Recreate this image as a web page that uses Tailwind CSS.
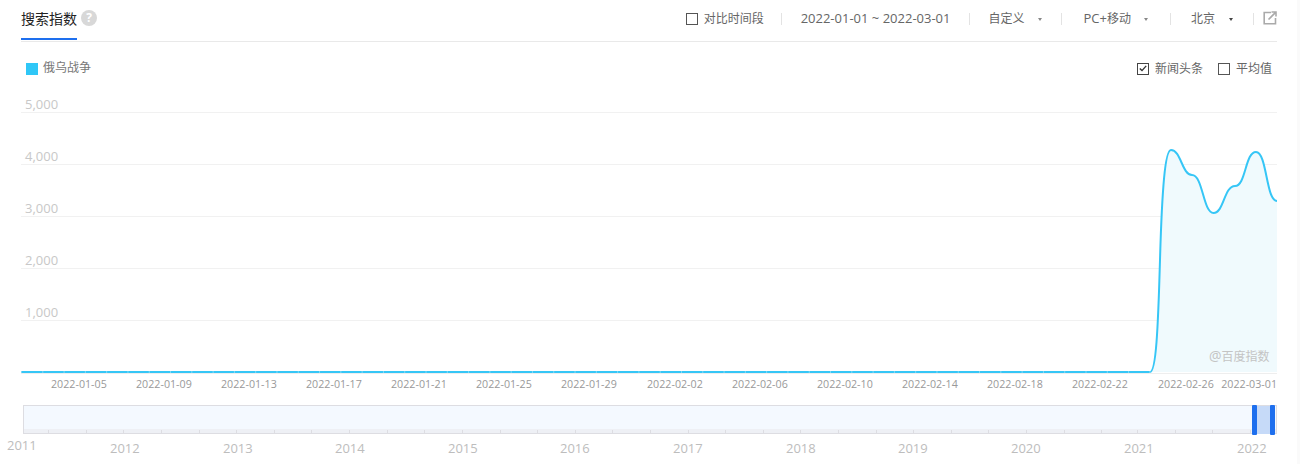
<!DOCTYPE html>
<html lang="zh">
<head>
<meta charset="utf-8">
<script src="https://cdn.jsdelivr.net/npm/@tailwindcss/browser@4"></script>
</head>
<body class="bg-white overflow-hidden font-['Open_Sans','Noto_Sans_CJK_SC',sans-serif]">
<div class="relative w-[1300px] h-[464px] pl-[21px] pr-[23px]">
  <div class="absolute right-0 top-0 w-[3px] h-full bg-[#fafafa]"></div>
  <header class="flex items-center justify-between h-[42px] border-b border-[#e9e9e9] text-[12px] text-[#666]">
    <div class="relative h-[41px] flex items-center gap-[4px] text-[14px] text-[#222] border-b-2 border-transparent">
      <span class="relative pb-[3px]">搜索指数</span>
      <span class="flex items-center justify-center w-4 h-4 mb-[3px] rounded-full bg-[#d8d8d8] text-white text-[12px] font-bold">?</span>
      <span class="absolute left-0 bottom-[-1px] w-[56px] h-[2px] bg-[#1e6fee]"></span>
    </div>
    <div class="flex items-center pb-[3px]">
      <span class="w-3 h-3 border border-[#555] mr-[6px]"></span>
      <span>对比时间段</span>
      <span class="w-px h-3 bg-[#e3e3e3] ml-[17px] mr-[19px]"></span>
      <span class="text-[13px]">2022-01-01 ~ 2022-03-01</span>
      <span class="w-px h-3 bg-[#e3e3e3] ml-[18px] mr-[19px]"></span>
      <span>自定义</span>
      <span class="ml-[13px] mr-[19px] w-0 h-0 border-x-[2px] border-t-[3px] border-x-transparent border-t-[#888]"></span>
      <span class="w-px h-3 bg-[#e3e3e3] mr-[22px]"></span>
      <span><span class="text-[13px]">PC+</span>移动</span>
      <span class="ml-[13px] mr-[22px] w-0 h-0 border-x-[2px] border-t-[3px] border-x-transparent border-t-[#888]"></span>
      <span class="w-px h-3 bg-[#e3e3e3] mr-[20px]"></span>
      <span>北京</span>
      <span class="ml-[14px] mr-[20px] w-0 h-0 border-x-[2px] border-t-[3px] border-x-transparent border-t-[#444]"></span>
      <span class="w-px h-3 bg-[#e3e3e3] mr-[9px]"></span>
      <svg class="block mb-[3px]" width="14" height="14" viewBox="0 0 14 14" fill="none" stroke="#aaa" stroke-width="1.6"><path d="M8 1.5H1.2V12.8H12.5V7"/><path d="M5.5 8.5L12.6 1.4M8.5 1H13V5.5"/></svg>
    </div>
  </header>

  <div class="flex items-center justify-between h-[50px] pt-[3px] text-[12px] text-[#666]">
    <div class="flex items-center pl-[5px]">
      <span class="w-3 h-3 bg-[#2fc7f7] mr-[5px]"></span>
      <span class="text-[#777] pb-[2px]">俄乌战争</span>
    </div>
    <div class="flex items-center pr-[5px]">
      <span class="flex items-center justify-center w-3 h-3 border border-[#444] mr-[6px]">
        <svg width="8" height="7" viewBox="0 0 8 7" fill="none" stroke="#333" stroke-width="1.4"><path d="M0.8 3.5L3 5.6L7.2 0.9"/></svg>
      </span>
      <span>新闻头条</span>
      <span class="w-3 h-3 border border-[#555] ml-[15px] mr-[6px]"></span>
      <span>平均值</span>
    </div>
  </div>

  <section class="relative h-[372px]">
    <svg class="absolute left-[-21px] top-[-92px]" width="1300" height="464" viewBox="0 0 1300 464">
      <g stroke="#f1f1f1" stroke-width="1">
        <path d="M21 112.5H1277M21 164.5H1277M21 216.5H1277M21 268.5H1277M21 320.5H1277"/>
      </g>
      <path d="M1150 372C1156 372 1158 330 1160 260C1162 190 1165 150 1171 150C1181 150 1182 175 1192 175C1203 175 1203 213 1213.5 213C1224 213 1224 186 1235 186C1246 186 1245 152 1256 152C1267 152 1266 201 1277 201V372Z" fill="#f0fafd"/>
      <path d="M21 372H1150C1156 372 1158 330 1160 260C1162 190 1165 150 1171 150C1181 150 1182 175 1192 175C1203 175 1203 213 1213.5 213C1224 213 1224 186 1235 186C1246 186 1245 152 1256 152C1267 152 1266 201 1277 201" fill="none" stroke="#36c6f6" stroke-width="2"/>
      <path d="M21 372H1277" fill="none" stroke="#ffffff" stroke-opacity="0.35" stroke-width="2" stroke-dasharray="1 20.29"/>
      <path d="M21 373.5H1277" stroke="#eeeeee" stroke-width="1"/>

      <rect x="23.5" y="405.5" width="1253" height="28" fill="#f4f9ff" stroke="#dddde2"/>
      <rect x="24" y="429" width="1252" height="4" fill="#eef0f5"/>
      <path d="M48.5 430V434M86.5 430V434M123.5 430V434M161.5 430V434M199.5 430V434M236.5 430V434M274.5 430V434M311.5 430V434M349.5 430V434M387.5 430V434M424.5 430V434M462.5 430V434M500.5 430V434M537.5 430V434M575.5 430V434M612.5 430V434M650.5 430V434M688.5 430V434M725.5 430V434M763.5 430V434M800.5 430V434M838.5 430V434M876.5 430V434M913.5 430V434M951.5 430V434M988.5 430V434M1026.5 430V434M1064.5 430V434M1101.5 430V434M1137.5 430V434M1175.5 430V434M1212.5 430V434M1250.5 430V434" stroke="#dddde2"/>
      <rect x="1255" y="406" width="17" height="28" fill="#c6daf8"/>
      <rect x="1252" y="405" width="5" height="30" rx="1" fill="#1e6fee"/>
      <rect x="1270" y="405" width="5" height="30" rx="1" fill="#1e6fee"/>
    </svg>

    <div class="absolute inset-0 text-[13px] leading-[18px] text-[#c8c8c8]">
      <span class="absolute left-[4px] top-[3px]">5,000</span>
      <span class="absolute left-[4px] top-[55px]">4,000</span>
      <span class="absolute left-[4px] top-[107px]">3,000</span>
      <span class="absolute left-[4px] top-[159px]">2,000</span>
      <span class="absolute left-[4px] top-[211px]">1,000</span>
      <span class="absolute left-[1188px] top-[255px] text-[#c4c4c4] text-[12px]"><span class="text-[14px]">@</span>百度指数</span>
    </div>

    <div class="absolute left-0 top-[284px] w-[1256px] h-4 text-[10.7px] leading-4 text-[#999]">
      <span class="absolute left-[30px]">2022-01-05</span>
      <span class="absolute left-[115px]">2022-01-09</span>
      <span class="absolute left-[200px]">2022-01-13</span>
      <span class="absolute left-[285px]">2022-01-17</span>
      <span class="absolute left-[370px]">2022-01-21</span>
      <span class="absolute left-[455px]">2022-01-25</span>
      <span class="absolute left-[540px]">2022-01-29</span>
      <span class="absolute left-[626px]">2022-02-02</span>
      <span class="absolute left-[711px]">2022-02-06</span>
      <span class="absolute left-[796px]">2022-02-10</span>
      <span class="absolute left-[881px]">2022-02-14</span>
      <span class="absolute left-[966px]">2022-02-18</span>
      <span class="absolute left-[1051px]">2022-02-22</span>
      <span class="absolute left-[1137px]">2022-02-26</span>
      <span class="absolute right-0">2022-03-01</span>
    </div>

    <div class="absolute left-[-21px] top-[346px] w-[1300px] h-5 text-[13px] leading-5 text-[#bdbdbd]">
      <span class="absolute left-[7px] top-[-3px]">2011</span>
      <span class="absolute left-[110px]">2012</span>
      <span class="absolute left-[223px]">2013</span>
      <span class="absolute left-[335px]">2014</span>
      <span class="absolute left-[448px]">2015</span>
      <span class="absolute left-[560px]">2016</span>
      <span class="absolute left-[673px]">2017</span>
      <span class="absolute left-[786px]">2018</span>
      <span class="absolute left-[898px]">2019</span>
      <span class="absolute left-[1011px]">2020</span>
      <span class="absolute left-[1124px]">2021</span>
      <span class="absolute left-[1237px]">2022</span>
    </div>
  </section>
</div>
</body>
</html>
